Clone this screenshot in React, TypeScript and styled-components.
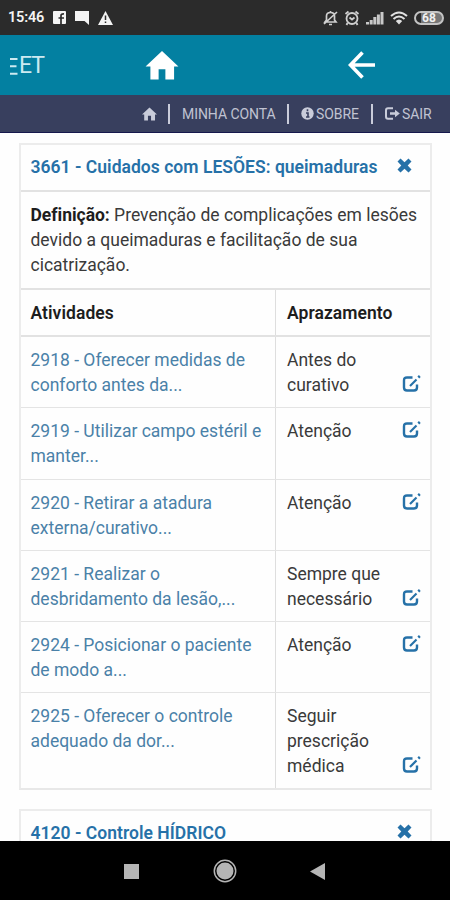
import React from 'react';
import styled, { createGlobalStyle } from 'styled-components';

const GlobalStyle = createGlobalStyle`
  * { box-sizing: border-box; }
  body { margin: 0; background: #fefefe; font-family: Roboto, sans-serif; }
  svg { flex: none; }
`;

const Screen = styled.div`
  width: 450px;
  height: 900px;
  display: flex;
  flex-direction: column;
  overflow: hidden;
  background: #fefefe;
`;

const StatusBar = styled.header`
  flex: none;
  height: 35px;
  padding: 0 6px 0 8px;
  display: flex;
  align-items: center;
  justify-content: space-between;
  background: #2b2b2b;
  color: #f4f4f4;
`;

const StatusGroup = styled.div<{ $gap: number }>`
  display: flex;
  align-items: center;
  gap: ${(p) => p.$gap}px;
`;

const Clock = styled.span`
  width: 36px;
  font-size: 14.5px;
  font-weight: 600;
  letter-spacing: -0.2px;
`;

const Battery = styled.span`
  width: 30px;
  height: 14px;
  border: 2px solid #c4c4c4;
  border-radius: 7px;
  background: linear-gradient(90deg, #2b2b2b 20%, #777 20%);
  color: #f0f0f0;
  font-size: 12px;
  font-weight: 700;
  line-height: 10px;
  text-align: center;
`;

const AppBar = styled.div`
  flex: none;
  height: 60px;
  padding: 0 74px 0 10px;
  display: grid;
  grid-template-columns: 135px 1fr 28px;
  align-items: center;
  background: #0380a1;
  color: #fff;
`;

const Brand = styled.div`
  width: 36px;
  display: flex;
  align-items: center;
  gap: 1px;
  padding-top: 2px;
  font-size: 23px;
  letter-spacing: -1px;
  line-height: 30px;
  color: #cdeaf1;
  white-space: nowrap;
`;

const MenuBar = styled.nav`
  flex: none;
  height: 38px;
  padding: 0 17px 0 142px;
  display: flex;
  align-items: center;
  background: #383f5e;
  border-bottom: 1px solid #15184d;
  color: #c0c3d2;
`;

const Divider = styled.span<{ $left: number; $right: number }>`
  flex: none;
  width: 2px;
  height: 20px;
  margin: 1px ${(p) => p.$right}px 0 ${(p) => p.$left}px;
  background: #c9ccda;
`;

const MenuItem = styled.span<{ $width: number }>`
  flex: none;
  width: ${(p) => p.$width}px;
  display: flex;
  align-items: center;
  gap: 2px;
  font-size: 14px;
  letter-spacing: -0.05px;
  white-space: nowrap;
`;

const Content = styled.main`
  flex: 1;
  min-height: 0;
  overflow: hidden;
  padding: 10px 18px 0 19px;
`;

const Card = styled.section`
  margin-bottom: 19px;
  border: 2px solid #ececec;
  border-bottom-color: #e8e8e8;
  font-size: 17.5px;
  line-height: 25px;
  color: #3a3a3a;
`;

const CardTitle = styled.div`
  height: 47px;
  padding: 0 18px 1px 9.5px;
  display: flex;
  align-items: center;
  justify-content: space-between;
  border-bottom: 2px solid #e2e2e2;
  color: #2671a8;
  font-weight: 600;
  letter-spacing: 0.03px;
  white-space: nowrap;
`;

const TitleIcon = styled.span`
  display: flex;
  margin-top: -3px;
`;

const Definition = styled.p`
  margin: 0;
  height: 98px;
  padding: 11px 9px 0 9.5px;
  border-bottom: 2px solid #e2e2e2;
  white-space: nowrap;
`;

const Term = styled.b`
  font-weight: 700;
  letter-spacing: -0.02px;
  color: #1d1d1d;
`;

const Row = styled.div<{ $height: number; $head?: boolean }>`
  height: ${(p) => p.$height}px;
  display: grid;
  grid-template-columns: 255px 1fr;
  border-bottom: ${(p) => (p.$head ? '2px solid #e2e2e2' : '1px solid #e4e4e4')};
  font-weight: ${(p) => (p.$head ? 600 : 400)};
  letter-spacing: ${(p) => (p.$head ? 0.05 : 0)}px;
  color: ${(p) => (p.$head ? '#1d1d1d' : '#3a3a3a')};
  &:last-child { border-bottom: 0; }
`;

const Cell = styled.div`
  padding: 11px 9px 0 9.5px;
  white-space: pre-line;
  & + & { padding: 11px 9px 0 11px; }
  &:first-child { border-right: 1px solid #dedede; }
`;

const Activity = styled.span`
  color: #4a81a8;
`;

const Schedule = styled.div`
  display: flex;
  justify-content: space-between;
`;

const EditButton = styled.span<{ $lines: number }>`
  display: flex;
  align-self: flex-start;
  padding-top: ${(p) => (p.$lines - 1) * 25 + 2}px;
`;

const AndroidNav = styled.footer`
  flex: none;
  height: 59px;
  padding: 1px 125px 0 124px;
  display: flex;
  align-items: center;
  justify-content: space-between;
  background: #000;
`;

const HomeIcon = ({ w, h, fill }: { w: number; h: number; fill: string }) => (
  <svg width={w} height={h} viewBox="0 0 34 30" fill={fill}>
    <path d="M17 0 34 16H29.500V29.500H20.500V19H13.500V29.500H5V16H0Z" />
  </svg>
);

const CloseIcon = () => (
  <svg width="15" height="15" viewBox="0 0 15 15" fill="#2671a8">
    <path d="M3.500.5 7.500 4.300 11.500.5 14.500 3.500 10.700 7.500 14.500 11.500 11.500 14.500 7.500 10.700 3.500 14.500.5 11.500 4.300 7.500.5 3.500Z" />
  </svg>
);

const EditIcon = () => (
  <svg width="19" height="18" viewBox="0 0 19 18" fill="none" stroke="#2671a8">
    <path d="M10.500 2.500H5Q2 2.500 2 5.500V12.500Q2 15.500 5 15.500H12Q15 15.500 15 12.500V9.500" strokeWidth="2.400" />
    <path d="M8 11 14.500 4.500" strokeWidth="2.200" />
    <path d="M16.300 2.500 17.800 1" strokeWidth="2.500" />
  </svg>
);

const rows = [
  { h: 71, a: '2918 - Oferecer medidas de\nconforto antes da...', s: 'Antes do\ncurativo' },
  { h: 72, a: '2919 - Utilizar campo estéril e\nmanter...', s: 'Atenção' },
  { h: 71, a: '2920 - Retirar a atadura\nexterna/curativo...', s: 'Atenção' },
  { h: 71, a: '2921 - Realizar o\ndesbridamento da lesão,...', s: 'Sempre que\nnecessário' },
  { h: 71, a: '2924 - Posicionar o paciente\nde modo a...', s: 'Atenção' },
  { h: 95, a: '2925 - Oferecer o controle\nadequado da dor...', s: 'Seguir\nprescrição\nmédica' },
];

export default function App() {
  return (
    <Screen>
      <GlobalStyle />
      <StatusBar>
        <StatusGroup $gap={9}>
          <Clock>15:46</Clock>
          <svg width="13" height="13" viewBox="0 0 13 13">
            <rect width="13" height="13" rx="1" fill="#f4f4f4" />
            <path d="M8 13V4.500Q8 2.700 11 3M5.500 7H11" fill="none" stroke="#2b2b2b" strokeWidth="1.700" />
          </svg>
          <svg width="14" height="14" viewBox="0 0 14 14" fill="#f4f4f4">
            <path d="M0 0H14V14L9.500 10H0Z" />
          </svg>
          <svg width="15" height="14" viewBox="0 0 15 14">
            <path d="M7.500 0 15 14H0Z" fill="#f4f4f4" />
            <path d="M7.500 4.500V9M7.500 10.500V12" stroke="#2b2b2b" strokeWidth="1.500" />
          </svg>
        </StatusGroup>
        <StatusGroup $gap={6}>
          <svg width="15" height="16" viewBox="0 0 15 16" fill="none" stroke="#d0d0d0" strokeWidth="1.700">
            <path d="M2 12H13L11.500 10V6Q11.500 2.500 7.500 2.500T3.500 6V10ZM6 14.500H9M7.500 1V3M1 14 14 2" />
          </svg>
          <svg width="16" height="16" viewBox="0 0 15 16" fill="none" stroke="#d0d0d0" strokeWidth="1.800">
            <circle cx="7.500" cy="8.500" r="5.500" />
            <path d="M1 4 4 1.500M14 4 11 1.500M5 7.500 7.500 9.500 10 7.500M3 13 2 15M12 13 13 15" />
          </svg>
          <svg width="18" height="14" viewBox="0 0 18 14" fill="#c8c8c8">
            <path d="M0 11H3V13.500H0ZM3.700 9H6.700V13.500H3.700ZM7.300 6H10.300V13.500H7.300ZM10.900 3.500H13.900V13.500H10.900ZM14.500 1H17.500V13.500H14.500Z" />
          </svg>
          <svg width="18" height="14" viewBox="0 0 18 14" fill="none" stroke="#e0e0e0" strokeWidth="2">
            <path d="M1 5Q9-2 17 5M3.500 8Q9 3 14.500 8" />
            <path d="M5.800 10Q9 7 12.200 10L9 13.500Z" fill="#e0e0e0" stroke="none" />
          </svg>
          <Battery>68</Battery>
        </StatusGroup>
      </StatusBar>

      <AppBar>
        <Brand>
          <svg width="8" height="17" viewBox="0 0 8 17" stroke="#cdeaf1" strokeWidth="1.900">
            <path d="M0 1H7.500M0 8.300H6.500M0 15.800H7.500" />
          </svg>
          ET
        </Brand>
        <HomeIcon w={34} h={29} fill="#fff" />
        <svg width="28" height="28" viewBox="0 0 28 28" fill="none" stroke="#fff" strokeWidth="3.600">
          <path d="M27 14H3M14.500 1.500 2.500 14 14.500 26.500" />
        </svg>
      </AppBar>

      <MenuBar>
        <HomeIcon w={15} h={14} fill="#c9ccda" />
        <Divider $left={11} $right={12} />
        <MenuItem $width={93}>MINHA CONTA</MenuItem>
        <Divider $left={12} $right={12} />
        <MenuItem $width={58}>
          <svg width="13" height="13" viewBox="0 0 13 13">
            <circle cx="6.500" cy="6.500" r="6.200" fill="#c9ccda" />
            <path d="M6.500 2.300V4.300M5 6H7V10M5 10H8.500" stroke="#383f5e" strokeWidth="1.600" fill="none" />
          </svg>
          SOBRE
        </MenuItem>
        <Divider $left={12} $right={12} />
        <MenuItem $width={49}>
          <svg width="15" height="13" viewBox="0 0 15 13" fill="none" stroke="#c9ccda">
            <path d="M8 1.200H3Q1 1.200 1 3.500V9.500Q1 11.800 3 11.800H8" strokeWidth="2" />
            <path d="M5 6.500H11" strokeWidth="2.500" />
            <path d="M10 2.800 14.800 6.500 10 10.200Z" fill="#c9ccda" stroke="none" />
          </svg>
          SAIR
        </MenuItem>
      </MenuBar>

      <Content>
        <Card>
          <CardTitle>
            3661 - Cuidados com LESÕES: queimaduras
            <TitleIcon>
              <CloseIcon />
            </TitleIcon>
          </CardTitle>
          <Definition>
            <Term>Definição:</Term> Prevenção de complicações em lesões
            <br />
            devido a queimaduras e facilitação de sua
            <br />
            cicatrização.
          </Definition>
          <Row $height={47} $head>
            <Cell>Atividades</Cell>
            <Cell>Aprazamento</Cell>
          </Row>
          {rows.map((r) => (
            <Row key={r.a} $height={r.h}>
              <Cell>
                <Activity>{r.a}</Activity>
              </Cell>
              <Cell>
                <Schedule>
                  {r.s}
                  <EditButton $lines={r.s.split('\n').length}>
                    <EditIcon />
                  </EditButton>
                </Schedule>
              </Cell>
            </Row>
          ))}
        </Card>
        <Card>
          <CardTitle>
            4120 - Controle HÍDRICO
            <TitleIcon>
              <CloseIcon />
            </TitleIcon>
          </CardTitle>
        </Card>
      </Content>

      <AndroidNav>
        <svg width="15" height="15" viewBox="0 0 15 15">
          <rect width="15" height="15" fill="#b5b5b5" />
        </svg>
        <svg width="24" height="24" viewBox="0 0 24 24">
          <circle cx="12" cy="12" r="10.700" fill="none" stroke="#b5b5b5" strokeWidth="1.500" />
          <circle cx="12" cy="12" r="8.500" fill="#b5b5b5" />
        </svg>
        <svg width="15" height="17" viewBox="0 0 15 17">
          <path d="M15 0V17L0 8.500Z" fill="#b5b5b5" />
        </svg>
      </AndroidNav>
    </Screen>
  );
}
